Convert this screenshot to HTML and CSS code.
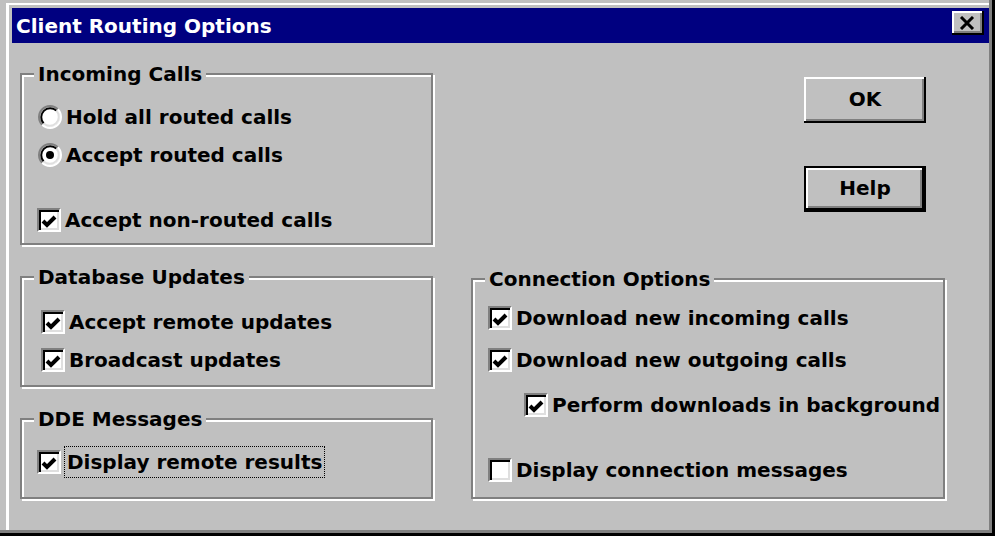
FILE: index.html
```html
<!DOCTYPE html>
<html lang="en">
<head>
<meta charset="utf-8">
<title>Client Routing Options</title>
<link rel="stylesheet" href="styles.css">
</head>
<body>
<div class="window">
  <div class="titlebar">
    <span class="title">Client Routing Options</span>
    <button class="close" aria-label="Close">
      <svg width="16" height="14" viewBox="0 0 16 14"><path d="M2 1 L14 13 M14 1 L2 13" stroke="#000" stroke-width="3" fill="none"/></svg>
    </button>
  </div>

  <div class="content">
    <div class="col-left">
      <div class="group g-incoming">
        <div class="group-title">Incoming Calls</div>
        <div class="row gap-a">
          <span class="radio"><svg width="24" height="24" viewBox="0 0 24 24"><circle cx="12" cy="12" r="10" fill="#fff"/><path d="M4.22 19.78 A11 11 0 0 1 19.78 4.22" stroke="#808080" stroke-width="2" fill="none"/><path d="M19.78 4.22 A11 11 0 0 1 4.22 19.78" stroke="#fff" stroke-width="2" fill="none"/><path d="M5.64 18.36 A9 9 0 0 1 18.36 5.64" stroke="#000" stroke-width="2" fill="none"/><path d="M18.36 5.64 A9 9 0 0 1 5.64 18.36" stroke="#dfdfdf" stroke-width="2" fill="none"/></svg></span>
          <span class="label">Hold all routed calls</span>
        </div>
        <div class="row gap-s">
          <span class="radio"><svg width="24" height="24" viewBox="0 0 24 24"><circle cx="12" cy="12" r="10" fill="#fff"/><path d="M4.22 19.78 A11 11 0 0 1 19.78 4.22" stroke="#808080" stroke-width="2" fill="none"/><path d="M19.78 4.22 A11 11 0 0 1 4.22 19.78" stroke="#fff" stroke-width="2" fill="none"/><path d="M5.64 18.36 A9 9 0 0 1 18.36 5.64" stroke="#000" stroke-width="2" fill="none"/><path d="M18.36 5.64 A9 9 0 0 1 5.64 18.36" stroke="#dfdfdf" stroke-width="2" fill="none"/><circle cx="12" cy="12" r="4" fill="#000"/></svg></span>
          <span class="label">Accept routed calls</span>
        </div>
        <div class="row gap-l">
          <span class="box"><svg width="20" height="20" viewBox="0 0 20 20"><polyline points="4,11 8,15 16,7" stroke="#000" stroke-width="4" fill="none"/></svg></span>
          <span class="label">Accept non-routed calls</span>
        </div>
      </div>

      <div class="group g-database">
        <div class="group-title">Database Updates</div>
        <div class="row gap-b">
          <span class="box"><svg width="20" height="20" viewBox="0 0 20 20"><polyline points="4,11 8,15 16,7" stroke="#000" stroke-width="4" fill="none"/></svg></span>
          <span class="label">Accept remote updates</span>
        </div>
        <div class="row gap-s">
          <span class="box"><svg width="20" height="20" viewBox="0 0 20 20"><polyline points="4,11 8,15 16,7" stroke="#000" stroke-width="4" fill="none"/></svg></span>
          <span class="label">Broadcast updates</span>
        </div>
      </div>

      <div class="group g-dde">
        <div class="group-title">DDE Messages</div>
        <div class="row gap-a">
          <span class="box"><svg width="20" height="20" viewBox="0 0 20 20"><polyline points="4,11 8,15 16,7" stroke="#000" stroke-width="4" fill="none"/></svg></span>
          <span class="label focus">Display remote results</span>
        </div>
      </div>
    </div>

    <div class="col-right">
      <div class="buttons">
        <button class="btn">OK</button>
        <button class="btn default">Help</button>
      </div>

      <div class="group g-connection">
        <div class="group-title">Connection Options</div>
        <div class="row gap-c">
          <span class="box"><svg width="20" height="20" viewBox="0 0 20 20"><polyline points="4,11 8,15 16,7" stroke="#000" stroke-width="4" fill="none"/></svg></span>
          <span class="label">Download new incoming calls</span>
        </div>
        <div class="row gap-d">
          <span class="box"><svg width="20" height="20" viewBox="0 0 20 20"><polyline points="4,11 8,15 16,7" stroke="#000" stroke-width="4" fill="none"/></svg></span>
          <span class="label">Download new outgoing calls</span>
        </div>
        <div class="row gap-e indent">
          <span class="box"><svg width="20" height="20" viewBox="0 0 20 20"><polyline points="4,11 8,15 16,7" stroke="#000" stroke-width="4" fill="none"/></svg></span>
          <span class="label">Perform downloads in background</span>
        </div>
        <div class="row gap-l">
          <span class="box"></span>
          <span class="label">Display connection messages</span>
        </div>
      </div>
    </div>
  </div>
</div>
</body>
</html>
```

FILE: styles.css
```css
* {
  box-sizing: border-box;
}

html,
body {
  margin: 0;
  padding: 0;
  background: #fff;
}

body {
  font-family: "DejaVu Sans", "Liberation Sans", sans-serif;
  font-weight: bold;
  font-size: 20px;
  color: #000;
}

/* dialog frame: light top/left edge, dark bottom/right edge */
.window {
  width: 995px;
  height: 536px;
  background: #c0c0c0;
  padding: 8px 6px 6px 12px;
  display: flex;
  flex-direction: column;
  box-shadow:
    inset -3px -3px 0 #000,
    inset -6px -6px 0 #808080,
    inset 6px 3px 0 #c0c0c0,
    inset 9px 5px 0 #fff;
}

.titlebar {
  height: 35px;
  flex: none;
  background: #000080;
  color: #fff;
  display: flex;
  align-items: center;
  justify-content: space-between;
  padding-left: 4px;
}

.title {
  white-space: nowrap;
}

.close {
  width: 32px;
  height: 24px;
  align-self: flex-start;
  margin: 3px 5px 0 0;
  padding: 0 2px 1px 0;
  border: 0;
  background: #c0c0c0;
  display: flex;
  align-items: center;
  justify-content: center;
  box-shadow:
    inset -2px -2px 0 #000,
    inset 2px 2px 0 #fff,
    inset -4px -4px 0 #808080;
}

.content {
  display: flex;
  padding-left: 8px;
}

.col-left {
  width: 413px;
  display: flex;
  flex-direction: column;
}

.col-right {
  width: 474px;
  margin-left: 38px;
  display: flex;
  flex-direction: column;
}

/* etched group box */
.group {
  border: 2px solid #808080;
  box-shadow: inset 2px 2px 0 #fff, 2px 2px 0 #fff;
}

.group-title {
  display: table;
  margin: -13px 0 0 12px;
  padding: 0 4px;
  line-height: 24px;
  background: #c0c0c0;
  white-space: nowrap;
}

.g-incoming {
  margin-top: 30px;
  padding-bottom: 7px;
}

.g-database {
  margin-top: 31px;
  padding-bottom: 9px;
}

.g-dde {
  margin-top: 31px;
  padding-bottom: 19px;
}

.g-connection {
  margin-top: 66px;
  padding-bottom: 11px;
}

.row {
  display: flex;
  align-items: center;
  height: 32px;
  padding-left: 15px;
}

.g-database .row {
  padding-left: 19px;
}

.gap-a { margin-top: 15px; }
.gap-b { margin-top: 17px; }
.gap-c { margin-top: 11px; }
.gap-d { margin-top: 10px; }
.gap-e { margin-top: 13px; }
.gap-s { margin-top: 6px; }
.gap-l { margin-top: 33px; }

.row.indent {
  padding-left: 51px;
}

.label {
  white-space: nowrap;
}

.radio {
  width: 24px;
  height: 24px;
  flex: none;
  margin: 0 4px 0 1px;
  display: block;
}

.radio svg {
  display: block;
}

/* sunken check box */
.box {
  width: 24px;
  height: 24px;
  flex: none;
  margin-right: 4px;
  background: #fff;
  border: 2px solid;
  border-color: #808080 #fff #fff #808080;
  box-shadow: inset 2px 2px 0 #000, inset -2px -2px 0 #dfdfdf;
}

.box svg {
  display: block;
}

/* keyboard focus outline around the label */
.focus {
  height: 32px;
  display: flex;
  align-items: center;
  margin-left: -1px;
  padding: 0 2px;
  border: 1px dotted #000;
}

.buttons {
  margin: 34px 0 0 333px;
  display: flex;
  flex-direction: column;
  gap: 43px;
}

.btn {
  width: 122px;
  height: 46px;
  padding: 0 0 3px;
  border: 0;
  background: #c0c0c0;
  font: inherit;
  color: #000;
  box-shadow:
    inset -2px -2px 0 #000,
    inset 2px 2px 0 #fff,
    inset -4px -4px 0 #808080;
}

.btn.default {
  border: 2px solid #000;
}
```
